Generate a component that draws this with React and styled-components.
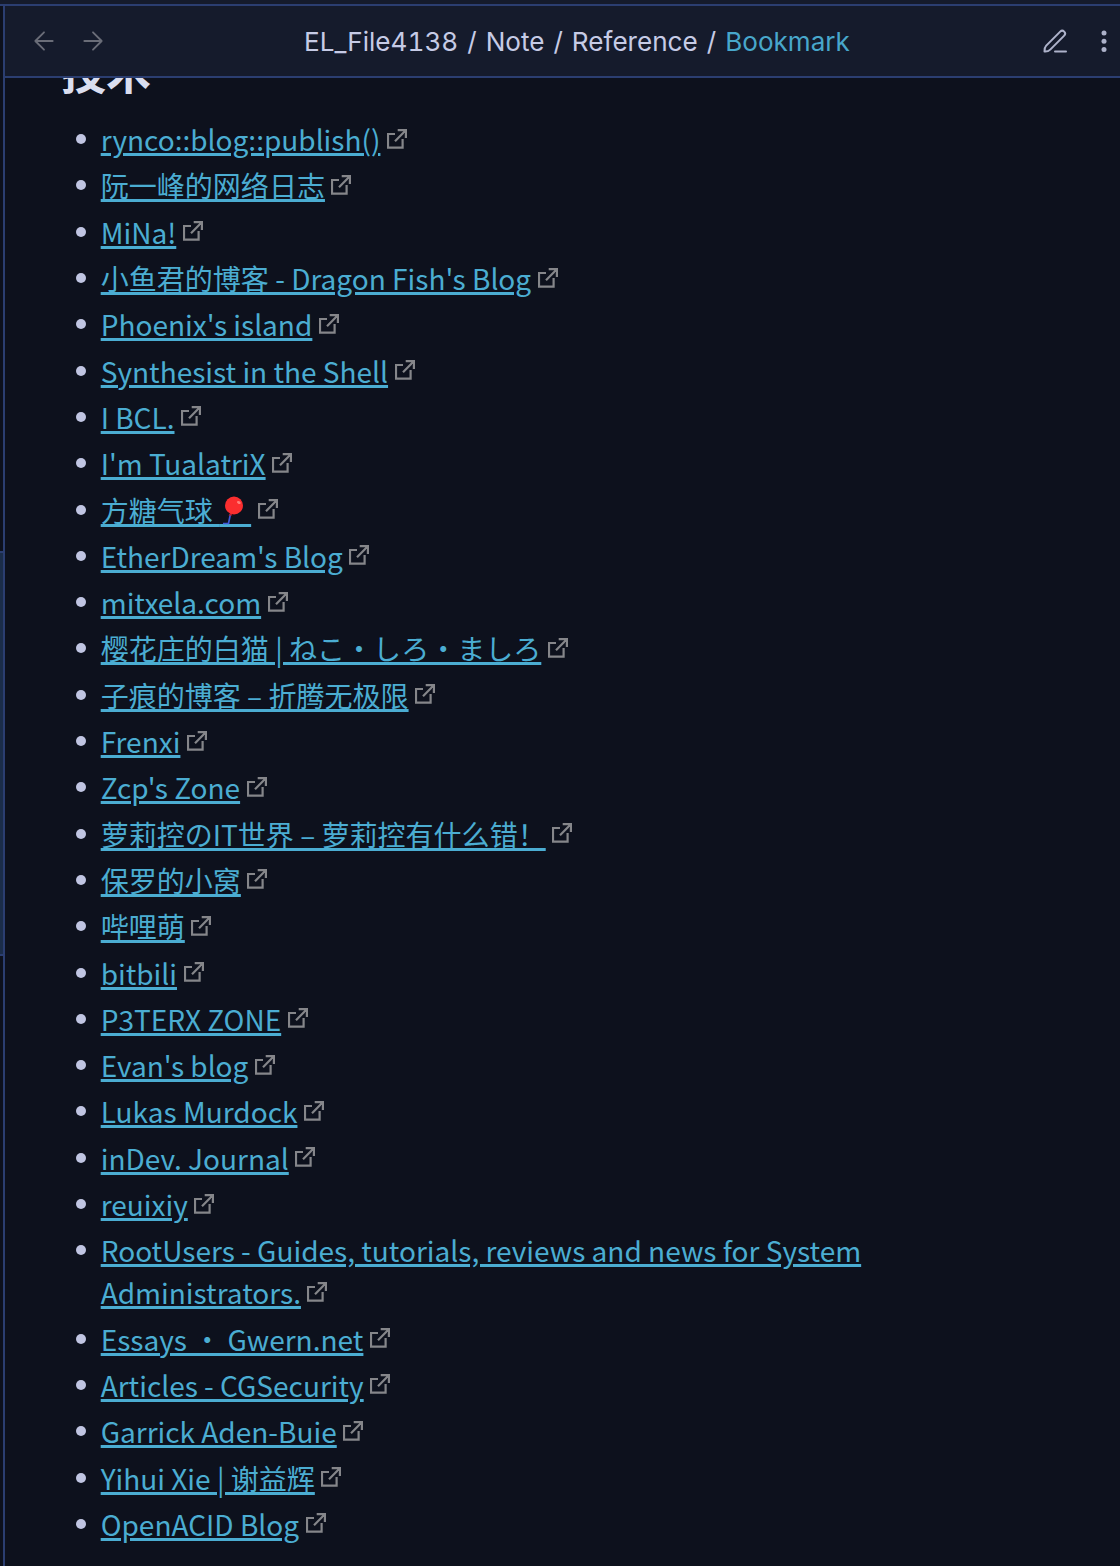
import React from "react";
import styled, { createGlobalStyle } from "styled-components";

const Global = createGlobalStyle`
  * { box-sizing: border-box; }
  html, body { margin: 0; background: #0d111d; overflow: hidden; }
`;

const Shell = styled.div`
  display: flex;
  flex-direction: column;
  width: 1120px;
  height: 1566px;
  overflow: hidden;
  background: #0d111d;
`;

const TopStrip = styled.div`
  flex: none;
  height: 6px;
  background: #151b2c;
  border-bottom: 2px solid #2b3e71;
`;

const Body = styled.div`
  display: flex;
  flex: 1;
  min-height: 0;
`;

const Rail = styled.div`
  display: flex;
  flex-direction: column;
  flex: none;
  width: 5px;
  border-right: 2px solid #2b3e71;
`;

const RailPart = styled.div`
  flex: ${(p) => (p.$height ? "none" : "1")};
  height: ${(p) => (p.$height ? `${p.$height}px` : "auto")};
  background: ${(p) => p.$bg};
  border-top: ${(p) => (p.$active ? "2px solid #2b3e71" : "0")};
  border-bottom: ${(p) => (p.$active ? "2px solid #2b3e71" : "0")};
`;

const Pane = styled.main`
  display: flex;
  flex-direction: column;
  flex: 1;
  min-width: 0;
`;

const Header = styled.header`
  display: flex;
  align-items: center;
  flex: none;
  height: 72px;
  padding: 0 13px 0 26px;
  background: #151b2c;
  border-bottom: 2px solid #2b3e71;
`;

const IconGroup = styled.div`
  display: flex;
  align-items: center;
  justify-content: ${(p) => p.$justify || "flex-start"};
  gap: ${(p) => p.$gap}px;
  width: ${(p) => p.$width}px;
  color: ${(p) => p.$color};
  svg { display: block; flex: none; }
`;

const Crumbs = styled.div`
  flex: 1;
  padding-top: 2px;
  text-align: center;
  white-space: nowrap;
  font: 400 26.1px/36px Inter, "Liberation Sans", sans-serif;
  font-variant-numeric: tabular-nums;
  word-spacing: 2px;
  color: #c6cbe6;
`;

const Current = styled.span`
  color: #48a7cb;
`;

const Note = styled.article`
  flex: 1;
  min-height: 0;
  overflow: hidden;
  padding-left: 57px;
  font-family: "Noto Sans CJK SC", "Noto Sans", sans-serif;
`;

const Heading = styled.h2`
  margin: -35px 0 19.2px -1px;
  font-size: 45px;
  line-height: 56px;
  font-weight: 700;
  color: #dadeef;
`;

const List = styled.ul`
  display: flex;
  flex-direction: column;
  gap: 4.3px;
  margin: 0;
  padding: 0;
  list-style: none;
`;

const Item = styled.li`
  display: flex;
  align-items: flex-start;
  width: 900px;
  font-size: 28.04px;
  line-height: 42px;
`;

const Bullet = styled.span`
  flex: none;
  width: 10px;
  height: 10px;
  margin: 16px 15px 0 13.7px;
  border-radius: 50%;
  background: #c0c5e2;
`;

const Entry = styled.div`
  white-space: pre-wrap;
`;

const Link = styled.a`
  color: #4badd2;
  text-decoration: underline;
  text-decoration-thickness: 2.6px;
  text-underline-offset: 2.4px;
`;

const ExternalSvg = styled.svg`
  margin-left: 6.5px;
  vertical-align: 2.5px;
  fill: none;
  stroke: #85868a;
  stroke-width: 2.2;
`;

const EmojiSlot = styled.span`
  position: relative;
  letter-spacing: 4px;
`;

const BalloonSvg = styled.svg`
  position: absolute;
  left: 3px;
  top: 7px;
`;

const External = () => (
  <ExternalSvg width="20" height="20" viewBox="0 0 20 20">
    <path d="M8 5H1V18.700H15.600V10M10.700 1.200H18.900V9M18.600 1.500L8 12.200" />
  </ExternalSvg>
);

const Balloon = () => (
  <EmojiSlot>
    {"\u2003"}
    <BalloonSvg width="24" height="30" viewBox="0 0 24 30">
      <path d="M8.500 18l-2 9.500H1" fill="none" stroke="#3f58d8" strokeWidth="1.700" />
      <path d="M9 16l-2.500 3.500h3.800z" fill="#b91f2b" />
      <circle cx="12" cy="9.500" r="9" fill="#fb2e2f" />
      <ellipse cx="16.800" cy="6.500" rx="2" ry="1.300" transform="rotate(30 16.800 6.500)" fill="#ff817b" />
    </BalloonSvg>
  </EmojiSlot>
);

const ArrowLeft = () => (
  <svg width="26" height="26" viewBox="0 0 24 24" fill="none" stroke="currentColor" strokeWidth="1.700" strokeLinecap="round" strokeLinejoin="round">
    <path d="M12 4l-8 8 8 8M4 12h16" />
  </svg>
);

const ArrowRight = () => (
  <svg width="26" height="26" viewBox="0 0 24 24" fill="none" stroke="currentColor" strokeWidth="1.700" strokeLinecap="round" strokeLinejoin="round">
    <path d="M12 4l8 8-8 8M20 12H4" />
  </svg>
);

const Pencil = () => (
  <svg width="26" height="26" viewBox="0 0 26 26" fill="none" stroke="currentColor" strokeWidth="2" strokeLinecap="round" strokeLinejoin="round">
    <path d="M2.500 23.500C2.300 20.500 2.500 19.300 4.200 17.600L18.200 3.600a2.800 2.800 0 0 1 4 4L8.200 21.600C6.500 23.300 5 23.700 2.500 23.500z" />
    <path d="M13 23.500h11" />
  </svg>
);

const Dots = () => (
  <svg width="6" height="26" viewBox="0 0 6 26" fill="currentColor">
    <circle cx="3" cy="5" r="2.500" />
    <circle cx="3" cy="13.200" r="2.500" />
    <circle cx="3" cy="21.400" r="2.500" />
  </svg>
);

const links = [
  "rynco::blog::publish()",
  "阮一峰的网络日志",
  "MiNa!",
  "小鱼君的博客 - Dragon Fish's Blog",
  "Phoenix's island",
  "Synthesist in the Shell",
  "I BCL.",
  "I'm TualatriX",
  <>方糖气球 <Balloon /></>,
  "EtherDream's Blog",
  "mitxela.com",
  "樱花庄的白猫 | ねこ・しろ・ましろ",
  "子痕的博客 – 折腾无极限",
  "Frenxi",
  "Zcp's Zone",
  "萝莉控のIT世界 – 萝莉控有什么错！",
  "保罗的小窝",
  "哔哩萌",
  "bitbili",
  "P3TERX ZONE",
  "Evan's blog",
  "Lukas Murdock",
  "inDev. Journal",
  "reuixiy",
  <>RootUsers - Guides, tutorials, reviews and news for System<br />Administrators.</>,
  "Essays ・ Gwern.net",
  "Articles - CGSecurity",
  "Garrick Aden-Buie",
  "Yihui Xie | 谢益辉",
  "OpenACID Blog",
];

export default function App() {
  return (
    <Shell>
      <Global />
      <TopStrip />
      <Body>
        <Rail>
          <RailPart $height={545} $bg="#0d111d" />
          <RailPart $height={405} $bg="#1b2d49" $active />
          <RailPart $bg="#0d111d" />
        </Rail>
        <Pane>
          <Header>
            <IconGroup $gap={23} $width={140} $color="#6a6d78">
              <ArrowLeft />
              <ArrowRight />
            </IconGroup>
            <Crumbs>
              EL_File4138 / Note / Reference / <Current>Bookmark</Current>
            </Crumbs>
            <IconGroup $gap={33} $width={124} $justify="flex-end" $color="#adb2ca">
              <Pencil />
              <Dots />
            </IconGroup>
          </Header>
          <Note>
            <Heading>技术</Heading>
            <List>
              {links.map((label, i) => (
                <Item key={i}>
                  <Bullet />
                  <Entry>
                    <Link>{label}</Link>
                    <External />
                  </Entry>
                </Item>
              ))}
            </List>
          </Note>
        </Pane>
      </Body>
    </Shell>
  );
}
